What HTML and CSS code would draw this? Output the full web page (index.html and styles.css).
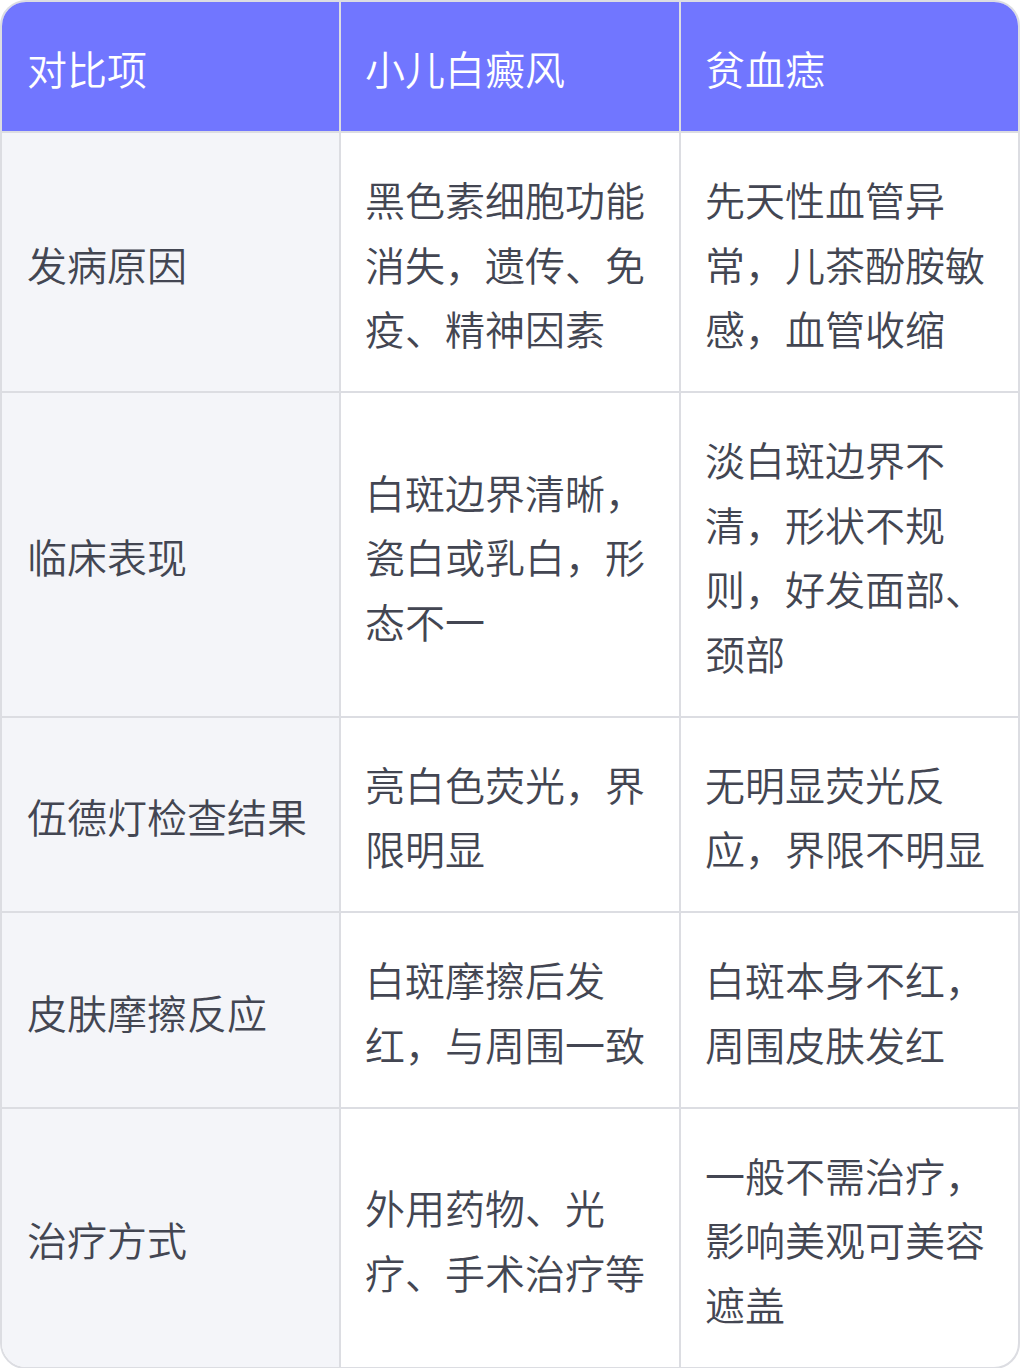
FILE: index.html
```html
<!DOCTYPE html>
<html lang="zh-CN">
<head>
<meta charset="utf-8">
<link rel="stylesheet" href="styles.css">
</head>
<body>
<div class="card">
  <table class="cmp">
    <colgroup>
      <col class="c1"><col class="c2"><col class="c3">
    </colgroup>
    <thead>
      <tr><th>对比项</th><th>小儿白癜风</th><th>贫血痣</th></tr>
    </thead>
    <tbody>
      <tr><td class="key">发病原因</td><td>黑色素细胞功能消失，遗传、免疫、精神因素</td><td>先天性血管异常，儿茶酚胺敏感，血管收缩</td></tr>
      <tr><td class="key">临床表现</td><td>白斑边界清晰，瓷白或乳白，形态不一</td><td>淡白斑边界不清，形状不规则，好发面部、颈部</td></tr>
      <tr><td class="key">伍德灯检查结果</td><td>亮白色荧光，界限明显</td><td>无明显荧光反应，界限不明显</td></tr>
      <tr><td class="key">皮肤摩擦反应</td><td>白斑摩擦后发红，与周围一致</td><td>白斑本身不红，周围皮肤发红</td></tr>
      <tr><td class="key">治疗方式</td><td>外用药物、光疗、手术治疗等</td><td>一般不需治疗，影响美观可美容遮盖</td></tr>
    </tbody>
  </table>
</div>
</body>
</html>
```
FILE: styles.css
```css
html, body {
  margin: 0;
  padding: 0;
  background: #ffffff;
}
.card {
  width: 1020px;
  box-sizing: border-box;
  border: 2px solid #dcdde2;
  border-radius: 26px;
  overflow: hidden;
  background: #ffffff;
}
.cmp {
  width: 100%;
  border-collapse: separate;
  border-spacing: 0;
  table-layout: fixed;
  font-family: "Noto Sans CJK SC", "Noto Sans", sans-serif;
  font-size: 40px;
  line-height: 64.5px;
  color: #434652;
}
.c1 { width: 339px; }
.c2 { width: 340px; }
.c3 { width: auto; }
.cmp th, .cmp td {
  text-align: left;
  vertical-align: middle;
  padding: 34.25px 24px 30.25px;
  border: 0 solid #dcdde2;
  border-right-width: 2px;
  border-bottom-width: 2px;
  font-weight: 350;
}
.cmp tr > :first-child { padding-left: 25px; }
.cmp tr > :last-child { border-right-width: 0; }
.cmp thead th {
  background: #7176ff;
  color: #ffffff;
}
.cmp tbody tr:last-child td { border-bottom-width: 0; }
.cmp td.key {
  background: #f4f5f9;
}
```
